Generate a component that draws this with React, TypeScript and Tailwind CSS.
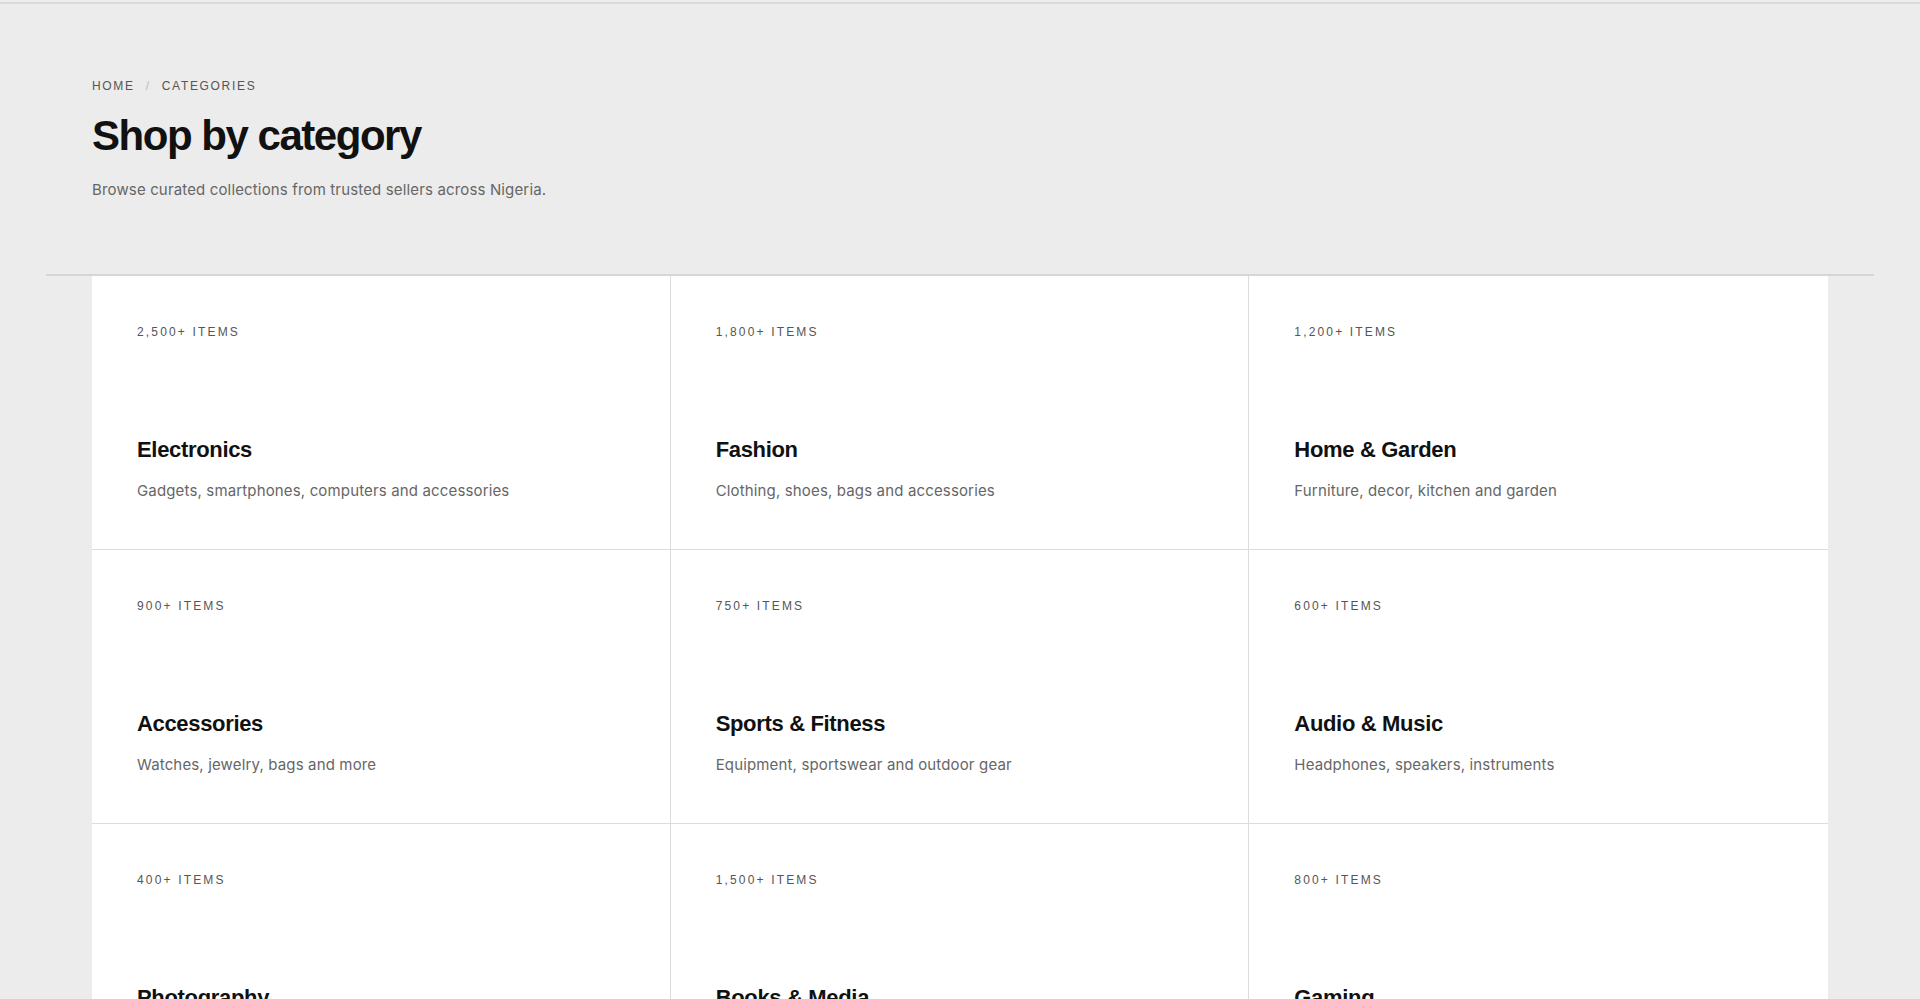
const categories = [
  { count: '2,500+ items', name: 'Electronics', desc: 'Gadgets, smartphones, computers and accessories' },
  { count: '1,800+ items', name: 'Fashion', desc: 'Clothing, shoes, bags and accessories' },
  { count: '1,200+ items', name: 'Home & Garden', desc: 'Furniture, decor, kitchen and garden' },
  { count: '900+ items', name: 'Accessories', desc: 'Watches, jewelry, bags and more' },
  { count: '750+ items', name: 'Sports & Fitness', desc: 'Equipment, sportswear and outdoor gear' },
  { count: '600+ items', name: 'Audio & Music', desc: 'Headphones, speakers, instruments' },
  { count: '400+ items', name: 'Photography', desc: 'Cameras, lenses and studio gear' },
  { count: '1,500+ items', name: 'Books & Media', desc: 'Books, films, music and magazines' },
  { count: '800+ items', name: 'Gaming', desc: 'Consoles, games and accessories' },
];

const bodyFont = { fontFamily: 'Inter, "Liberation Sans", sans-serif' };

function CategoryCard({ item, index }: { item: (typeof categories)[number]; index: number }) {
  const lastCol = index % 3 === 2;
  return (
    <a
      href="#"
      className={`block border-b border-[#dcdcdc] px-[45px] pt-[48px] pb-[47px] hover:bg-[#fafafa] ${
        lastCol ? '' : 'border-r'
      }`}
    >
      <div className="text-[12px] leading-4 tracking-[0.18em] uppercase text-[#555]">{item.count}</div>
      <h3 className="mt-[96px] text-[22px] leading-7 font-bold tracking-[-0.015em] text-[#111]">{item.name}</h3>
      <p className="mt-[16px] text-[15px] leading-[22px] tracking-[0.01em] text-[#666]" style={bodyFont}>
        {item.desc}
      </p>
    </a>
  );
}

export default function App() {
  return (
    <div
      className="min-h-screen bg-[#ececec] pt-[2px]"
      style={{ fontFamily: '"Liberation Sans", Arial, sans-serif' }}
    >
      <div className="border-t-2 border-[#dadada]" />
      <div className="px-[46px]">
        {/* Header */}
        <div className="px-[46px] pt-[74px] pb-[73px]">
          <nav className="flex items-center gap-[11px] text-[12px] leading-4 tracking-[0.14em] uppercase text-[#555]">
            <span>Home</span>
            <span className="text-[#bbb]">/</span>
            <span>Categories</span>
          </nav>
          <h1 className="mt-[19px] text-[42px] leading-[46px] font-bold tracking-[-0.035em] text-[#111]">
            Shop by category
          </h1>
          <p className="mt-[20px] text-[15px] leading-[22px] tracking-[0.01em] text-[#666]" style={bodyFont}>
            Browse curated collections from trusted sellers across Nigeria.
          </p>
        </div>

        {/* Grid */}
        <div className="border-t-2 border-[#d6d6d6]">
          <div className="mx-[46px] grid grid-cols-3 bg-white">
            {categories.map((c, i) => (
              <CategoryCard key={c.name} item={c} index={i} />
            ))}
          </div>
        </div>
      </div>
    </div>
  );
}
